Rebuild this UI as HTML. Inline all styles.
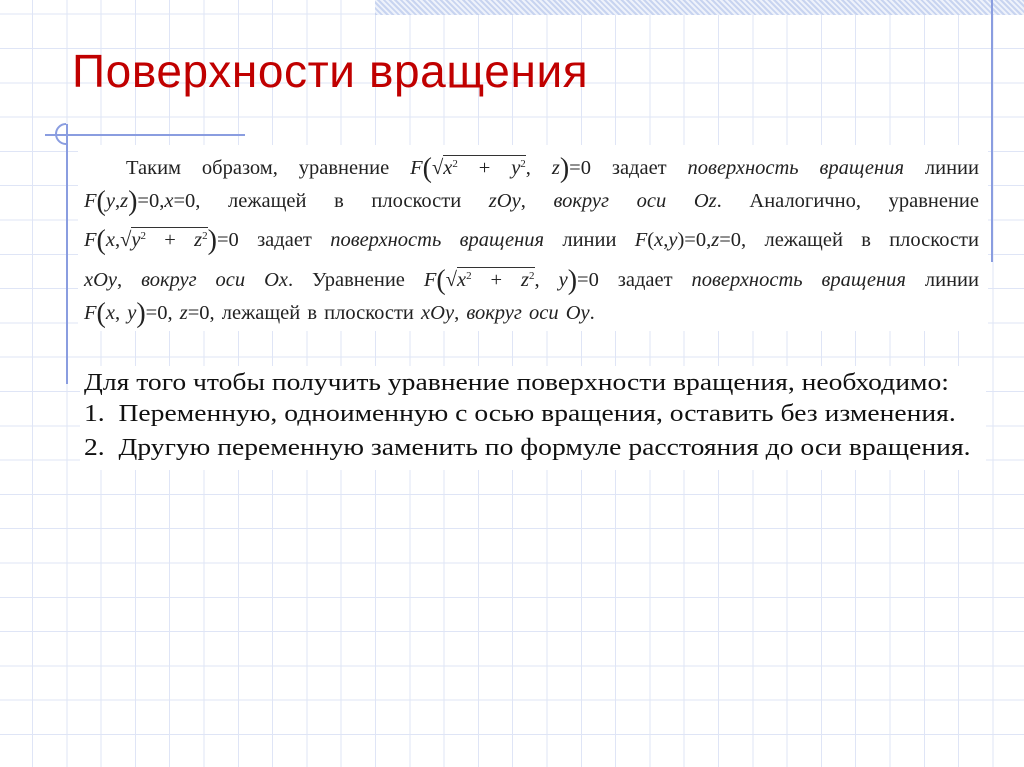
<!DOCTYPE html>
<html><head><meta charset="utf-8"><style>
html,body{margin:0;padding:0}
body{width:1024px;height:767px;position:relative;overflow:hidden;background:#fff;
background-image:repeating-linear-gradient(90deg,transparent 0 32px,#dfe5f6 32px 33px,transparent 33px 34.3px),
repeating-linear-gradient(0deg,transparent 0 32px,#dfe5f6 32px 33px,transparent 33px 34.3px);
font-family:"Liberation Serif",serif;}
.bar{position:absolute;left:375px;top:0;width:649px;height:15px;background:repeating-linear-gradient(45deg,#c8d4f0 0 2px,#eef2fb 2px 4px)}
.vl{position:absolute;background:#8a9de0}
.title{position:absolute;left:72px;top:44px;font-family:"Liberation Sans",sans-serif;font-size:46px;color:#c00000;white-space:nowrap;letter-spacing:0.6px}
.box{position:absolute;background:#fff}
.ln{position:absolute;left:84px;width:895px;font-size:20.5px;color:#222;text-align:justify;text-align-last:justify;white-space:nowrap;line-height:24px}
.sq{border-top:1px solid #333;padding-top:1px}
sup{font-size:11px;vertical-align:7px;line-height:0}
.big{font-size:28px;line-height:0;vertical-align:-3px}
.l2{position:absolute;left:84px;font-size:24px;color:#111;white-space:nowrap;line-height:28px;transform:scaleX(1.15);transform-origin:0 0}
</style></head><body>
<div class="bar"></div>
<div class="vl" style="left:991px;top:0;width:2px;height:262px"></div>
<div class="title">Поверхности вращения</div>
<div class="vl" style="left:45px;top:134px;width:200px;height:2px"></div>
<div class="vl" style="left:66px;top:124px;width:2px;height:260px"></div>
<div style="position:absolute;left:55px;top:123px;width:22px;height:22px;border:2px solid #8a9de0;border-radius:50%;box-sizing:border-box;clip-path:inset(0 50% 0 0)"></div>
<div class="box" style="left:78px;top:145px;width:910px;height:186px"></div>
<div class="box" style="left:80px;top:366px;width:906px;height:104px"></div>
<div class="ln" style="top:156px;padding-left:42px;width:853px">Таким образом, уравнение <i>F</i><span class="big">(</span>√<span class="sq"><i>x</i><sup>2</sup> + <i>y</i><sup>2</sup></span>, <i>z</i><span class="big">)</span>=0 задает <i>поверхность вращения</i> линии</div>
<div class="ln" style="top:189px"><i>F</i><span class="big">(</span><i>y</i>,<i>z</i><span class="big">)</span>=0,<i>x</i>=0, лежащей в плоскости <i>zOy</i>, <i>вокруг оси Oz</i>. Аналогично, уравнение</div>
<div class="ln" style="top:228px"><i>F</i><span class="big">(</span><i>x</i>,√<span class="sq"><i>y</i><sup>2</sup> + <i>z</i><sup>2</sup></span><span class="big">)</span>=0 задает <i>поверхность вращения</i> линии <i>F</i>(<i>x</i>,<i>y</i>)=0,<i>z</i>=0, лежащей в плоскости</div>
<div class="ln" style="top:268px"><i>xOy</i>, <i>вокруг оси Ox</i>. Уравнение <i>F</i><span class="big">(</span>√<span class="sq"><i>x</i><sup>2</sup> + <i>z</i><sup>2</sup></span>, <i>y</i><span class="big">)</span>=0 задает <i>поверхность вращения</i> линии</div>
<div class="ln" style="top:301px;text-align-last:left;word-spacing:2px"><i>F</i><span class="big">(</span><i>x</i>, <i>y</i><span class="big">)</span>=0, <i>z</i>=0, лежащей в плоскости <i>xOy</i>, <i>вокруг оси Oy</i>.</div>
<div class="l2" style="top:369px">Для того чтобы получить уравнение поверхности вращения, необходимо:</div>
<div class="l2" style="top:400px">1.&nbsp; Переменную, одноименную с осью вращения, оставить без изменения.</div>
<div class="l2" style="top:434px">2.&nbsp; Другую переменную заменить по формуле расстояния до оси вращения.</div>
</body></html>
